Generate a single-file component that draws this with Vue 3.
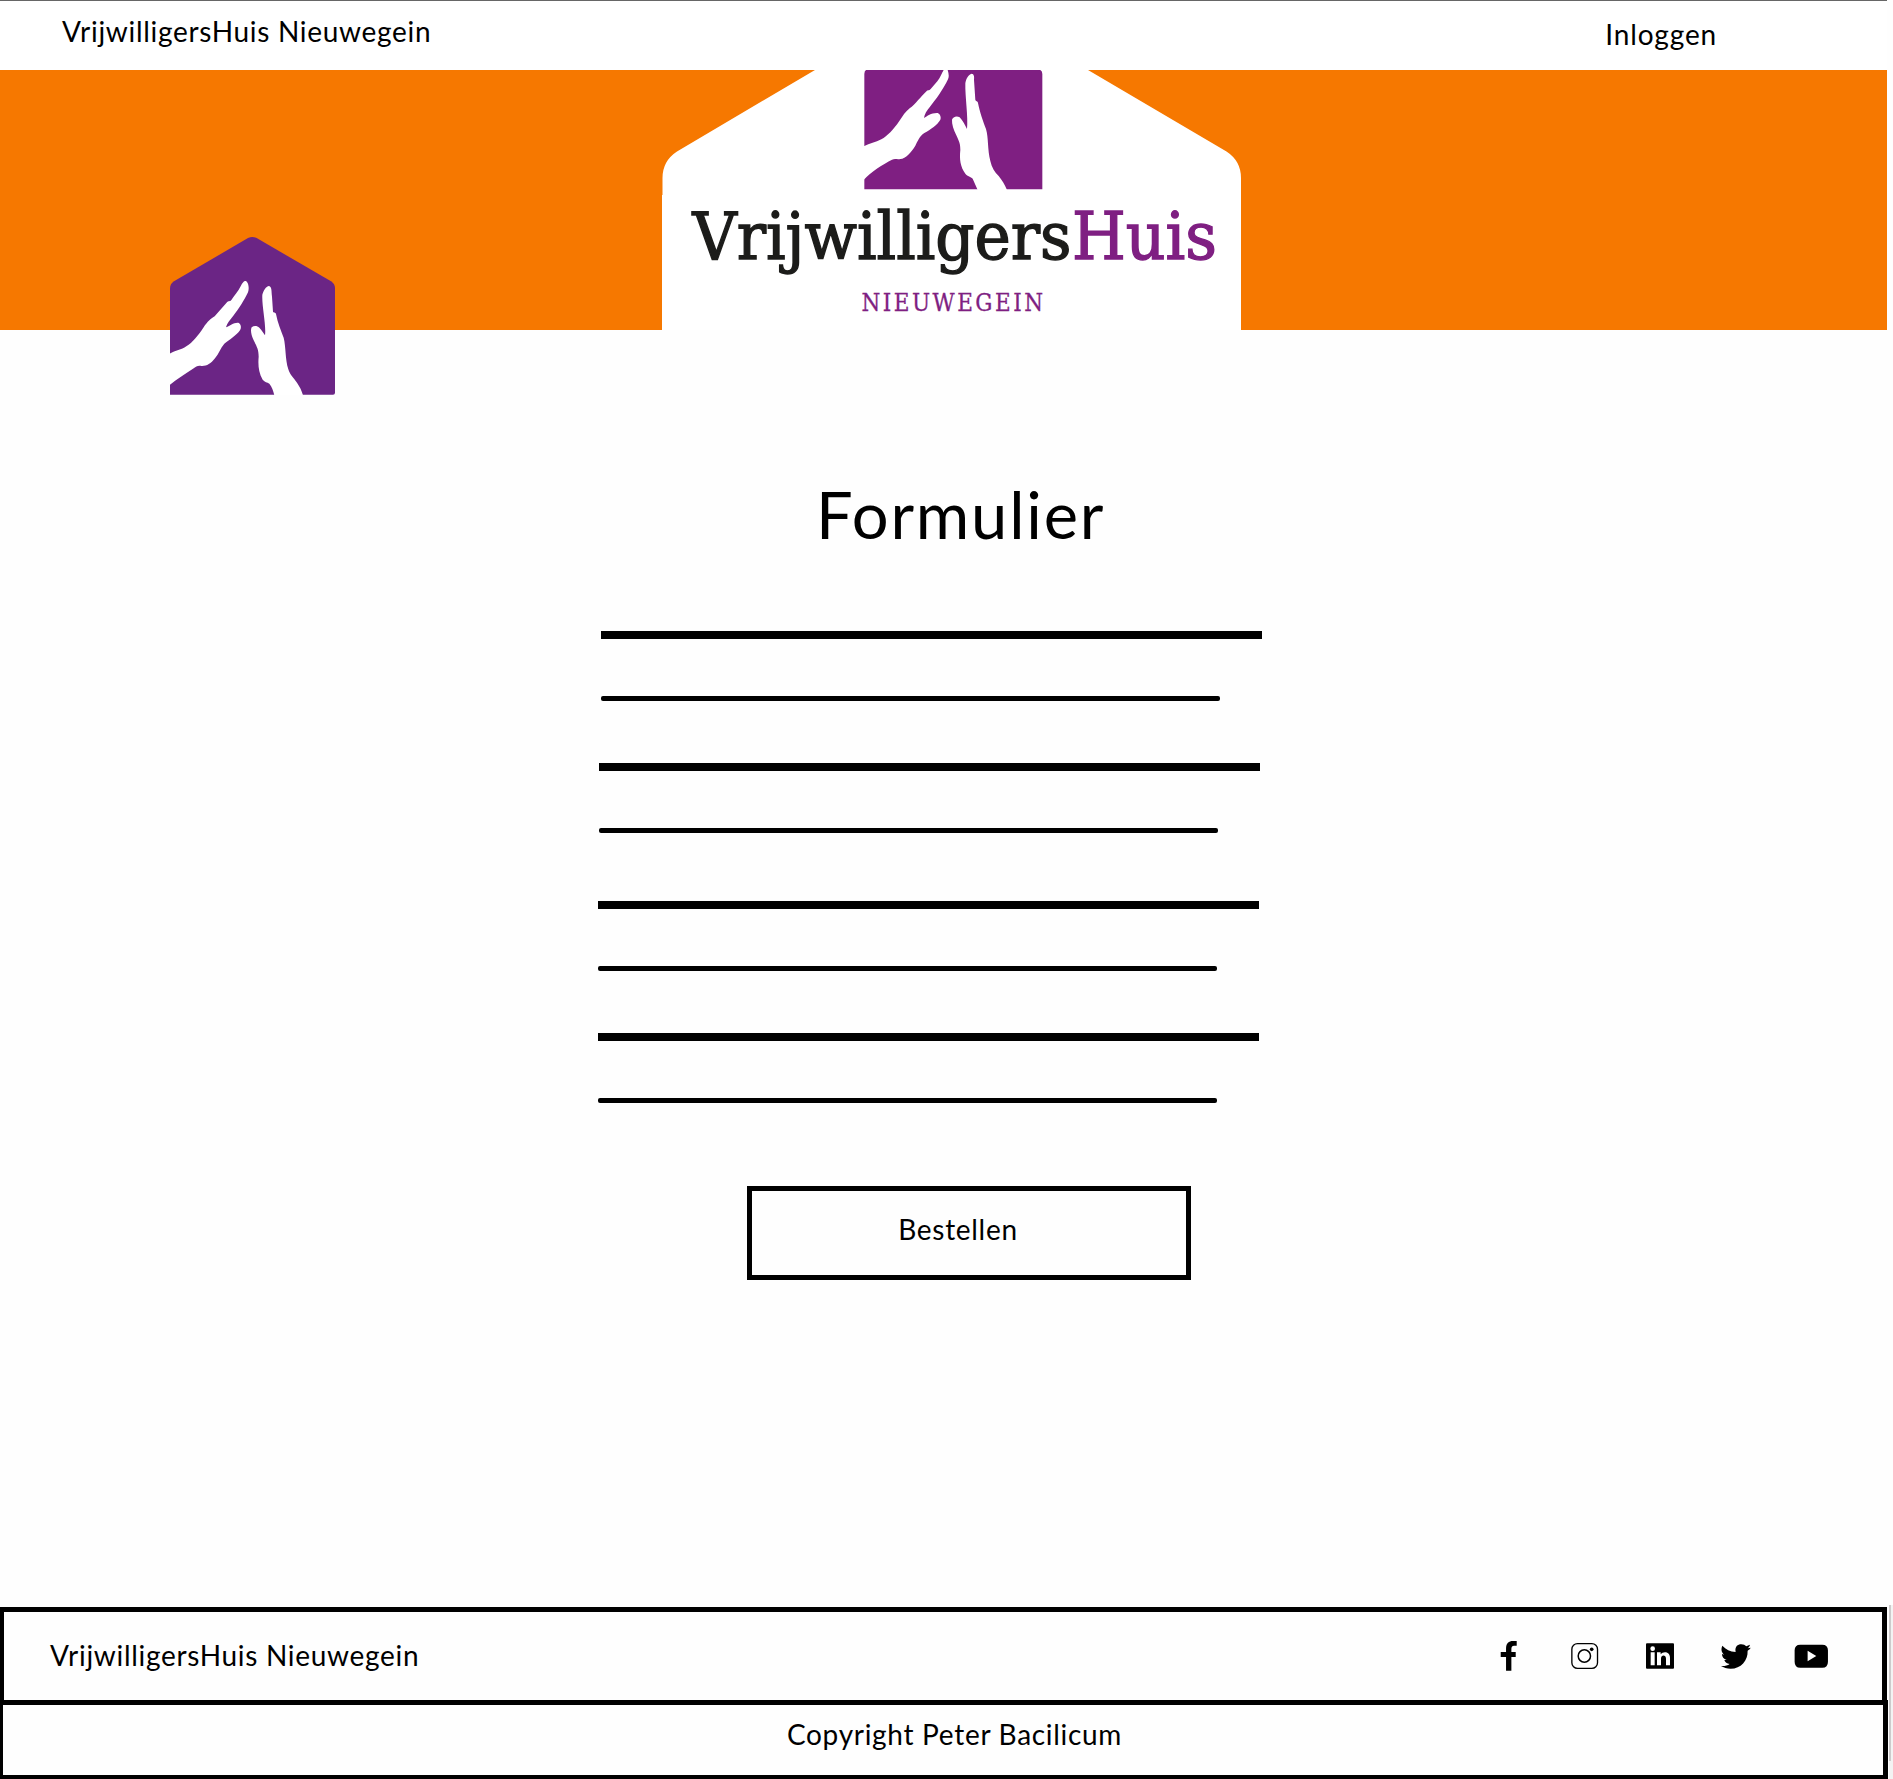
<script setup>
const rows = [
  { left: 601, gap: 0 },
  { left: 599, gap: 62 },
  { left: 598, gap: 68 },
  { left: 598, gap: 62 },
]
</script>

<template>
  <div class="page">
    <header class="topbar">
      <span class="label">VrijwilligersHuis Nieuwegein</span>
      <a class="label login">Inloggen</a>
    </header>

    <section class="banner">
      <svg class="logo" viewBox="650 70 600 260" width="600" height="260">
        <path fill="#fff" d="M815 70L677 151.500Q662.500 161 662.500 178V195H662V330H1241V178Q1241 161 1226.500 151.500L1088 70Z" />
        <g transform="translate(850 60) scale(.33333)">
          <path fill="#7f1f82" d="M43 388V42Q43 33 48 30H571Q577 33 577 42V388Z" />
          <path fill="#fff" d="M38 260L43 258C58 250 77 247 94 238C112 228 130 209 148 183C159 167 166 155 179 145C196 132 213 109 231 92C235 90 239 92 242 87L262 64C272 51 275 40 281 30H293C296 40 298 49 294 58C279 89 256 121 240 140C231 150 223 163 222 174C232 168 244 158 263 159C270 161 274 171 271 179C263 194 242 208 223 219C208 229 203 244 196 257C184 277 167 296 151 297C141 299 135 295 126 299C100 312 61 337 43 358L38 363Z" />
          <path fill="#fff" d="M384 393L382 388C377 377 373 366 368 356C362 349 353 350 346 341C331 321 328 297 331 270C331 251 328 246 319 226C311 209 305 193 306 179C308 170 321 166 329 172C339 182 344 195 351 207C355 172 345 110 346 70C348 56 355 44 365 41C372 42 373 49 372 59L376 119C377 125 383 122 384 129C389 155 400 186 408 207C416 235 412 267 421 303C425 322 434 337 446 348C456 361 465 374 470 388L472 393Z" />
        </g>
        <g class="wordmark" font-size="65" stroke-width="1.300">
          <text x="692.500" y="259" textLength="379" lengthAdjust="spacingAndGlyphs" fill="#1c1c1a" stroke="#1c1c1a">Vrijwilligers</text>
          <text x="1072" y="259" textLength="145" lengthAdjust="spacingAndGlyphs" fill="#7f1f82" stroke="#7f1f82">Huis</text>
        </g>
        <text class="wordmark" x="861.500" y="310.500" font-size="24" textLength="184" lengthAdjust="spacingAndGlyphs" letter-spacing="2.500" fill="#7f1f82" stroke="#7f1f82" stroke-width=".300">NIEUWEGEIN</text>
      </svg>
      <svg class="house" viewBox="60 48 495 477" width="165" height="159">
        <path fill="#6b2585" d="M60 524V205Q60 192 72 184L294 54Q307 48 320 54L543 184Q555 192 555 205V518Q555 524 549 524Z" />
        <path fill="#fff" d="M58 402C74 391 94 390 109 379C128 367 144 347 160 323C174 303 181 297 194 289L231 247C235 241 240 246 244 240C254 226 264 215 272 199C278 187 283 181 289 184C296 190 298 205 294 217C284 239 266 267 250 287C239 301 231 310 228 322C241 317 250 307 265 308C273 312 275 322 270 331C259 347 237 360 223 371C211 384 207 401 195 415C182 432 169 439 154 438C144 436 139 439 129 446C106 461 79 478 58 496Z" />
        <path fill="#fff" d="M373 526C370 514 366 500 358 491C351 486 345 487 338 479C325 457 324 432 326 410C326 389 321 381 311 361C303 344 301 329 305 322C313 316 322 318 328 323C336 331 340 339 345 346C349 314 335 259 337 224C340 212 348 199 357 198C366 201 364 213 366 230L369 275C371 279 376 275 378 282C383 309 393 331 401 353C408 381 405 416 415 448C420 465 431 474 441 488C449 500 455 511 459 526Z" />
      </svg>
    </section>

    <main class="form">
      <h1>Formulier</h1>
      <div class="fields">
        <div v-for="(row, i) in rows" :key="i" class="field" :style="{ marginLeft: row.left + 'px', marginTop: row.gap + 'px' }">
          <div class="thick"></div>
          <div class="thin"></div>
        </div>
      </div>
      <button class="order"><span class="label">Bestellen</span></button>
    </main>

    <footer>
      <div class="foot-main">
        <span class="label">VrijwilligersHuis Nieuwegein</span>
        <svg class="social" viewBox="55 145 1000 110" width="333.333" height="36.667">
          <path d="M79 243V202H63V187H79V177C79 160 88 154 99 154H111V168H103C97 168 95 172 95 178V187H108V202H95V243Z" />
          <g fill="none" stroke="#000">
            <rect x="276.500" y="162" width="77" height="74" rx="17" stroke-width="4" />
            <circle cx="314" cy="199" r="18.500" stroke-width="4.500" />
          </g>
          <circle cx="336" cy="179" r="5.500" />
          <rect x="499" y="161" width="84" height="76" rx="3" />
          <g fill="#fff">
            <circle cx="519" cy="177" r="7" />
            <path d="M513 188H525V227H513ZM532 188H543V194C550 184 571 185 571 204V227H559V207C559 194 544 194 544 207V227H532Z" />
          </g>
          <path d="M728 168C739 179 751 186 768 187C765 171 774 164 785 164C792 164 796 166 800 170L811 165C810 170 807 173 804 176L813 174C811 178 808 180 804 183C805 213 784 237 753 237C742 237 732 234 724 229C734 230 743 228 750 223C742 222 736 218 734 211H741C732 208 727 202 727 193L734 195C726 189 723 180 728 168Z" />
          <path fill-rule="evenodd" d="M962 165H1028Q1045 165 1045 182V216Q1045 234 1028 234H962Q945 234 945 216V182Q945 165 962 165ZM984 183V215L1010 199Z" />
        </svg>
      </div>
      <div class="foot-copy"><span class="label">Copyright Peter Bacilicum</span></div>
      <div class="scrollbar"><div class="thumb"></div></div>
    </footer>
  </div>
</template>

<style>
body { margin: 0; background: #fefefe; }
</style>

<style scoped>
.page { width: 1893px; height: 1779px; overflow: hidden; display: flex; flex-direction: column; color: #000; font-family: Lato, "Open Sans", sans-serif; background: #fefefe; }
.label { font-size: 28px; line-height: 34px; letter-spacing: .7px; white-space: nowrap; }
.topbar { box-sizing: border-box; width: 1887px; height: 70px; flex: none; border-top: 1px solid #666; background: #fff; display: flex; align-items: flex-start; justify-content: space-between; padding: 13px 170px 0 62px; }
.login { margin-top: 3px; letter-spacing: .85px; }
.banner { position: relative; width: 1887px; height: 260px; flex: none; background: #f67800; }
.logo { display: block; margin-left: 650px; }
.wordmark { font-family: "DejaVu Serif Condensed", "DejaVu Serif", serif; }
.house { position: absolute; left: 170px; top: 166px; }
.form { display: flex; flex-direction: column; flex: 1; align-items: flex-start; }
h1 { font-weight: 400; font-size: 65px; line-height: 80px; margin: 144px 0 77px 816px; letter-spacing: 1.8px; white-space: nowrap; }
.field { width: 661px; }
.thick { height: 8px; background: #000; }
.thin { height: 5px; width: 619px; margin-top: 57px; background: #000; border-radius: 2px; }
.order { box-sizing: border-box; width: 444px; height: 94px; margin: 83px 0 0 747px; border: 5px solid #000; background: #fefefe; padding: 0 22px 8px 0; font-family: inherit; color: #000; display: flex; align-items: center; justify-content: center; }
footer { position: relative; flex: none; height: 172px; }
.foot-main { box-sizing: border-box; width: 1887px; height: 93px; border: solid #000; border-width: 5px 5px 0 4px; display: flex; align-items: center; justify-content: space-between; padding: 0 51px 0 46px; }
.foot-main .label { margin-top: -2px; }
.foot-copy { box-sizing: border-box; width: 1888px; height: 79px; border: solid #000; border-width: 5px 5px 4px 3px; display: flex; justify-content: center; padding: 12px 0 0 23px; }
.scrollbar { position: absolute; right: 0; top: -2px; width: 4px; height: 174px; background: #f3f3f3; }
.thumb { height: 156px; width: 2px; background: #cdcbcc; }
.social { display: block; }
</style>
